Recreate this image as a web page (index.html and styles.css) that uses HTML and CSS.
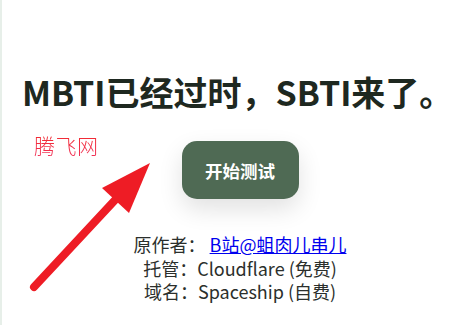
FILE: index.html
```html
<!DOCTYPE html>
<html lang="zh-CN">
<head>
<meta charset="utf-8">
<title>SBTI</title>
<link rel="stylesheet" href="styles.css">
</head>
<body>
<div class="page">
  <main class="hero">
    <h1 class="title">MBTI已经过时，SBTI来了。</h1>
    <div class="cta">
      <button class="start-btn" type="button">开始测试</button>
    </div>
    <div class="credits">
      <p class="credit-line">原作者： <a href="#" class="credit-link">B站@蛆肉儿串儿</a></p>
      <p class="credit-line">托管：Cloudflare (免费)</p>
      <p class="credit-line">域名：Spaceship (自费)</p>
    </div>
  </main>
  <div class="watermark">腾飞网</div>
  <svg class="arrow" width="160" height="160" viewBox="0 0 160 160" aria-hidden="true">
    <line x1="32" y1="147" x2="114" y2="59" stroke="#ee1c25" stroke-width="8" stroke-linecap="round"/>
    <polygon points="148,23 100,48 127,73" fill="#ee1c25"/>
  </svg>
</div>
</body>
</html>
```
FILE: styles.css
```css
html, body {
  margin: 0;
  padding: 0;
  background: #ffffff;
  overflow: hidden;
}
body {
  width: 453px;
  height: 325px;
  border-left: 2px solid #e7efe9;
  box-sizing: border-box;
  font-family: "Noto Sans CJK SC", "Noto Sans", sans-serif;
}
.page {
  position: relative;
  height: 325px;
}
.hero {
  width: 436px;
  padding-left: 20px;
  padding-top: 71px;
  display: flex;
  flex-direction: column;
}
.title {
  margin: 0;
  font-size: 34px;
  font-weight: 700;
  line-height: 42px;
  color: #1e2820;
  white-space: nowrap;
  text-align: left;
}
.cta {
  display: flex;
  justify-content: center;
  margin-top: 28px;
}
.start-btn {
  font-family: inherit;
  font-size: 17.5px;
  font-weight: 700;
  color: #ffffff;
  background: #4f6a54;
  border: none;
  border-radius: 15px;
  width: 117px;
  height: 58px;
  padding: 0;
  box-shadow: 0 10px 24px rgba(0, 0, 0, 0.12);
}
.credits {
  margin-top: 34px;
  text-align: center;
  color: #2b2f2c;
  font-size: 18px;
  line-height: 23.5px;
}
.credit-line {
  margin: 0;
}
.credit-link {
  color: #0000ee;
  text-decoration: underline;
}
.watermark {
  position: absolute;
  left: 32px;
  top: 131px;
  font-size: 21px;
  line-height: 28px;
  font-weight: 300;
  letter-spacing: 0.5px;
  background: linear-gradient(180deg, #f22a2a, #f0305a);
  -webkit-background-clip: text;
  background-clip: text;
  color: transparent;
}
.arrow {
  position: absolute;
  left: 0;
  top: 140px;
}
```
